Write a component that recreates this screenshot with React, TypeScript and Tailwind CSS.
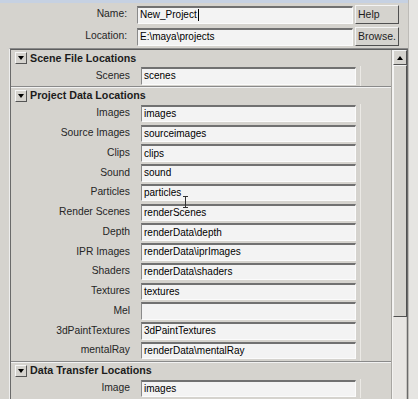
import React from "react";

const BG = "bg-[#d5d3ce]";

function Collapse() {
  return (
    <div className="w-[12px] h-[12px] shrink-0 bg-[#d5d3ce] border border-t-[#f6f6f6] border-l-[#f6f6f6] border-b-[#555555] border-r-[#555555] flex items-center justify-center">
      <div className="w-0 h-0 border-l-[3.5px] border-r-[3.5px] border-t-[4px] border-l-transparent border-r-transparent border-t-black" />
    </div>
  );
}

function Field({ value, w = 215, h = 17.5, cursor = false }: { value: string; w?: number; h?: number; cursor?: boolean }) {
  return (
    <div
      className="bg-[#f3f3f3] border-t-2 border-l border-b border-r border-t-[#717171] border-l-[#8a8a8a] border-b-[#fbfbfb] border-r-[#fbfbfb] flex items-center pl-[2px] text-[10px] text-black leading-none whitespace-nowrap overflow-hidden"
      style={{ width: w, height: h }}
    >
      {value}
      {cursor && <span className="inline-block w-[1px] h-[12px] bg-black ml-[1px]" />}
    </div>
  );
}

function Row({ label, value }: { label: string; value: string }) {
  return (
    <div className="h-[19.75px] flex items-center">
      <div className="w-[119px] text-right text-[10.3px] text-[#262626] leading-none whitespace-nowrap">{label}</div>
      <div className="ml-[11px]">
        <Field value={value} />
      </div>
      <div className="ml-[4px] h-full border-r border-[#ebe9e5]" />
    </div>
  );
}

function Header({ title }: { title: string }) {
  return (
    <div className="h-[16px] flex items-center pl-[4px]">
      <Collapse />
      <span className="ml-[3px] font-bold text-[10.7px] text-[#1c1c1c] leading-none whitespace-nowrap">{title}</span>
    </div>
  );
}

function Separator() {
  return <div className="h-[2px] border-t border-b border-t-[#8a8a8a] border-b-[#f2f2f2]" />;
}

function Button({ label }: { label: string }) {
  return (
    <div className="w-[44px] h-[19px] bg-[#d5d3ce] border border-t-[#f4f4f4] border-l-[#f4f4f4] border-b-[#505050] border-r-[#505050] flex items-center justify-start pl-[2px] text-[10.5px] text-[#1e1e1e] leading-none">
      {label}
    </div>
  );
}

const projectRows: [string, string][] = [
  ["Images", "images"],
  ["Source Images", "sourceimages"],
  ["Clips", "clips"],
  ["Sound", "sound"],
  ["Particles", "particles"],
  ["Render Scenes", "renderScenes"],
  ["Depth", "renderData\\depth"],
  ["IPR Images", "renderData\\iprImages"],
  ["Shaders", "renderData\\shaders"],
  ["Textures", "textures"],
  ["Mel", ""],
  ["3dPaintTextures", "3dPaintTextures"],
  ["mentalRay", "renderData\\mentalRay"],
];

export default function App() {
  return (
    <div className={`relative w-[418px] h-[399px] overflow-hidden ${BG} flex font-['Liberation_Sans',Arial,sans-serif]`}>
      <div className="w-[408px] h-full flex flex-col">
        <div className="h-[3px] bg-[#c6d1e2]" />
        <div className="h-[21px] mt-[1px] flex items-center">
          <div className="w-[127px] text-right text-[10.3px] text-[#262626] leading-none">Name:</div>
          <div className="ml-[10px]">
            <Field value="New_Project" w={216} h={18} cursor />
          </div>
          <div className="ml-[2px]">
            <Button label="Help" />
          </div>
        </div>
        <div className="h-[21px] mt-[1px] flex items-center">
          <div className="w-[127px] text-right text-[10.3px] text-[#262626] leading-none">Location:</div>
          <div className="ml-[10px]">
            <Field value="E:\maya\projects" w={216} h={18} />
          </div>
          <div className="ml-[2px]">
            <Button label="Browse." />
          </div>
        </div>
        <div className="mt-[1px] ml-[9px] flex-1 flex border-l border-t border-l-[#eeeeee] border-t-[#8a8a8a]">
          <div className="flex-1 flex border-l border-t border-l-[#6a6a6a] border-t-[#5e5e5e] border-r border-r-[#6a6a6a]">
            <div className="flex-1 flex flex-col border-r border-[#a8a6a2]">
              <Header title="Scene File Locations" />
              <Row label="Scenes" value="scenes" />
              <Separator />
              <Header title="Project Data Locations" />
              {projectRows.map(([l, v]) => (
                <Row key={l} label={l} value={v} />
              ))}
              <Separator />
              <Header title="Data Transfer Locations" />
              <Row label="Image" value="images" />
            </div>
            <div className="w-[15px] flex flex-col bg-[#e8e6e3] border-l border-[#f4f3f1]">
              <div className="h-[15px] bg-[#d5d3ce] border border-t-[#f4f4f4] border-l-[#f4f4f4] border-b-[#505050] border-r-[#505050] flex items-center justify-center">
                <div className="w-0 h-0 border-l-[3.5px] border-r-[3.5px] border-b-[4px] border-l-transparent border-r-transparent border-b-black" />
              </div>
              <div className="h-[252px] bg-[#d5d3ce] border border-t-[#f4f4f4] border-l-[#f4f4f4] border-b-[#505050] border-r-[#505050]" />
              <div className="flex-1 border-r border-[#c8c6c2]" />
            </div>
          </div>
        </div>
      </div>
      <div className="w-[10px] h-full bg-[#e6e5e2] border-l border-[#bdbbb7]" />
      <svg className="absolute left-[182px] top-[196px]" width="7" height="12" viewBox="0 0 7 12">
        <path d="M1 0.5h5M3.5 0.5v11M1 11.5h5" stroke="#333" strokeWidth="1" fill="none" />
      </svg>
    </div>
  );
}
